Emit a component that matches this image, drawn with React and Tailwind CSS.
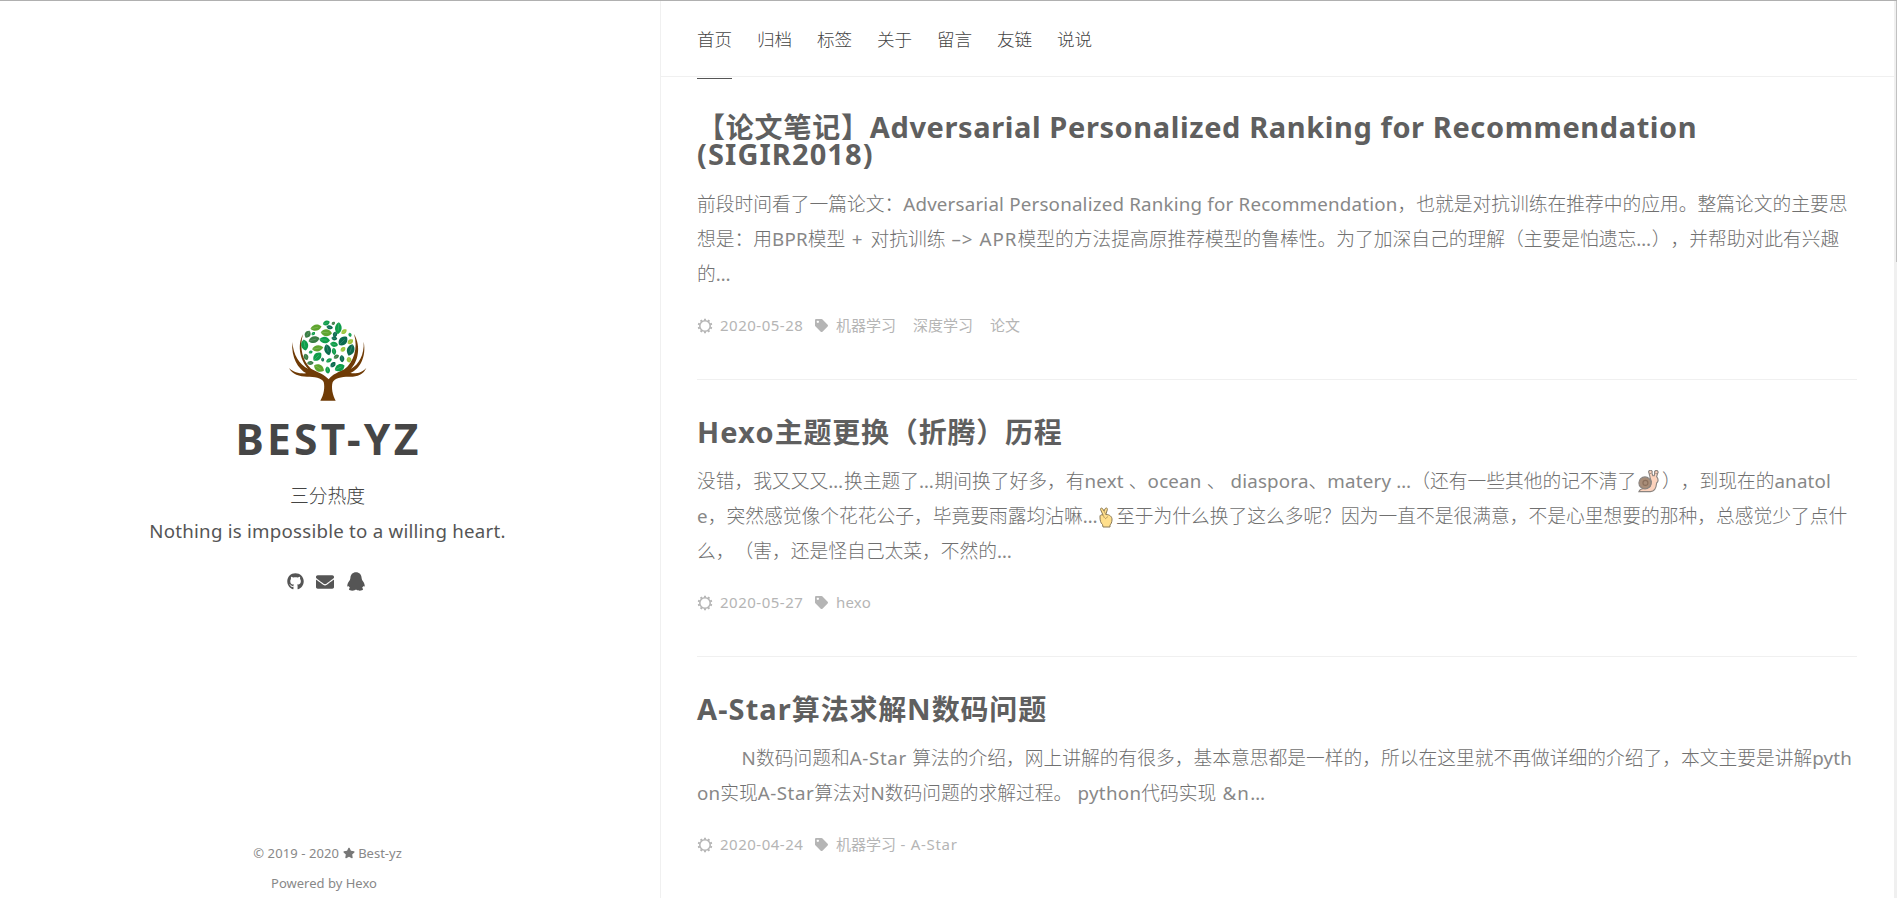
import React from "react";
import { FaGithub, FaEnvelope, FaTag, FaStar } from "react-icons/fa";

const G1 = "#0f9d4a";
const G2 = "#0b6b4f";
const G3 = "#5fa52e";
const G4 = "#3a7d44";
const G5 = "#9cc53b";

// x, y, length, width, angle, colour
const leaves = [
  [168, 70, 22, 12, -20, G1],
  [189, 71, 12, 8, -40, G4],
  [137, 84, 34, 16, -12, G3],
  [178, 83, 20, 10, 10, G2],
  [204, 86, 36, 17, 95, G1],
  [112, 104, 24, 15, 120, G4],
  [129, 102, 13, 8, -40, G1],
  [168, 99, 34, 18, 5, G3],
  [194, 104, 18, 11, 100, G2],
  [221, 96, 20, 11, -40, G5],
  [239, 105, 13, 8, 70, G1],
  [131, 120, 34, 17, -15, G4],
  [163, 121, 32, 17, 5, G1],
  [192, 116, 18, 11, 10, G2],
  [218, 124, 34, 20, -45, G2],
  [240, 126, 20, 12, -40, G5],
  [103, 136, 34, 18, 80, G1],
  [121, 157, 13, 8, -30, G1],
  [142, 146, 34, 16, -10, G3],
  [172, 150, 34, 17, 75, G2],
  [191, 134, 24, 13, 8, G1],
  [191, 155, 22, 11, 80, G1],
  [218, 149, 18, 11, -40, G5],
  [241, 151, 36, 19, 110, G2],
  [107, 172, 20, 12, 70, G4],
  [141, 171, 32, 18, -45, G1],
  [157, 180, 13, 8, 80, G2],
  [176, 182, 20, 10, -30, G1],
  [198, 171, 18, 10, -30, G4],
  [215, 177, 22, 12, 85, G2],
  [236, 180, 18, 12, 80, G5],
  [120, 190, 20, 10, -5, G4],
  [146, 205, 34, 18, 30, G3],
  [172, 211, 22, 12, 80, G1],
  [188, 195, 20, 12, -50, G2],
  [208, 204, 32, 18, -25, G1],
];

function TreeLogo() {
  return (
    <svg viewBox="50 55 246 252" className="block h-[84px] w-[82px]">
      <g fill="#6f3b06">
        <path d="M150 303 C161 285 164 262 160 247 C154 234 132 231 110 231 C88 231 65 224 56 205 C70 219 88 222 108 221 C84 208 62 175 66 127 C69 165 86 194 114 208 C92 186 78 140 98 104 C86 145 97 185 122 207 C142 218 163 224 175 239 C186 224 206 217 222 209 C250 188 264 145 251 103 C274 142 262 188 241 208 C266 194 282 165 280 126 C289 172 268 208 240 220 C258 223 276 219 288 204 C280 226 258 232 235 231 C213 231 192 236 187 248 C182 264 187 287 196 303 Z" />
      </g>
      {leaves.map(([x, y, l, w, a, c], i) => (
        <g key={i} transform={`translate(${x} ${y}) rotate(${a})`}>
          <path d={`M${-l / 2} 0 C${-l / 4} ${-w * 0.78} ${l / 4} ${-w * 0.78} ${l / 2} 0 C${l / 4} ${w * 0.78} ${-l / 4} ${w * 0.78} ${-l / 2} 0 Z`} fill={c} />
          <path d={`M${-l / 2} 0 L${l / 5} 0`} stroke="#fff" strokeOpacity="0.3" strokeWidth="1.5" />
        </g>
      ))}
    </svg>
  );
}

function Snail() {
  return (
    <svg viewBox="0 0 24 24" className="ml-px mr-[1.6px] inline-block h-[23px] w-[23px] align-[-5px]">
      <path d="M2 22.5 C3 19.5 6 19 10 19 C14 18.500 15 16 15 12 C14.500 10 13.500 8.500 13.500 7 L12.500 3 A1.800 1.800 0 1 1 15.500 3 L16.500 6 L18 6 L18.500 3 A1.800 1.800 0 1 1 21.500 3.500 L20.500 7 C22.500 9.500 22.500 12 20.500 13.500 C20 19 18 22.500 14 22.500 Z" fill="#fcd2bc" stroke="#8a8480" strokeWidth="1.200" />
      <circle cx="8.300" cy="13.500" r="6.300" fill="#a88d78" stroke="#8a8480" strokeWidth="1.200" />
      <circle cx="8.800" cy="13.500" r="2.600" fill="none" stroke="#8a6f5c" strokeWidth="1.200" />
      <path d="M14 3.500 V4 M20 3.500 V4" stroke="#555" strokeWidth="1.400" />
    </svg>
  );
}

function CrossedFingers() {
  return (
    <svg viewBox="0 0 14 21" className="ml-px mr-[2.5px] inline-block h-[21px] w-[14px] align-[-5px]">
      <path d="M1 10 C0.500 8 2.500 7.500 4 8 L1.500 2.500 C1.200 1 3 0.600 3.700 1.800 L5 4 L6.200 1.600 C7 0.500 8.800 1 8.400 2.500 L6.800 7.500 C10.500 7.500 13.300 9.500 13 13 C12.800 15.500 12 17 11 18 L11 20 L4 20 L3.500 17.500 C1.500 16 1 13 1 10 Z" fill="#ffdf8c" stroke="#8a7a58" strokeWidth="1" />
      <path d="M4 8 L5.500 11 M6.800 7.500 L5 4 M6 12 L9 9.500" fill="none" stroke="#a98f58" strokeWidth="0.800" />
    </svg>
  );
}

function Penguin() {
  return (
    <svg viewBox="0 0 18 19" className="h-[19px] w-[18px]" fill="currentColor">
      <path d="M9 0.300 C12.300 0.300 14.500 2.600 14.600 6 C14.600 6.700 15 7.200 15.100 8 C16.600 9.800 17.600 11.900 17.700 13.600 C17.700 14.800 17.100 15 16.300 14.100 C16 14.900 15.600 15.500 15 16.100 C15.900 16.500 16.200 17 16 17.600 C15.700 18.400 14.300 18.700 12.800 18.700 C11.400 18.700 10.200 18.300 9.500 17.800 H8.500 C7.800 18.300 6.600 18.700 5.200 18.700 C3.700 18.700 2.300 18.400 2 17.600 C1.800 17 2.100 16.500 3 16.100 C2.400 15.500 2 14.900 1.700 14.100 C0.900 15 0.300 14.800 0.300 13.600 C0.400 11.900 1.400 9.800 2.900 8 C3 7.200 3.400 6.700 3.400 6 C3.500 2.600 5.700 0.300 9 0.300 Z" />
    </svg>
  );
}

function RingIcon() {
  return (
    <svg viewBox="0 0 16 16" className="h-[16px] w-[16px] shrink-0" fill="none" stroke="currentColor">
      <circle cx="8" cy="8" r="5.200" strokeWidth="1.500" />
      {[0, 36, 72, 108, 144, 180, 216, 252, 288, 324].map((a) => (
        <path key={a} d="M8 2.600 V0.700" strokeWidth="1.900" transform={`rotate(${a} 8 8)`} />
      ))}
    </svg>
  );
}

const LATIN = /([\u0020-\u007e\u2013\u2026]+)/;

const WIDE_RUNS = {
  " + ": "tracking-[1.6px]",
  " –> APR": "tracking-[1px]",
  "A-Star ": "tracking-[0.6px]",
  "A-Star": "tracking-[0.5px]",
  " python": "tracking-[0.3px]",
  " &n…": "tracking-[1.2px]",
  "…": "tracking-[0.8px]",
};

function trackingOf(run) {
  return WIDE_RUNS[run] || "tracking-[0.19px]";
}

// Latin runs are set one weight heavier than the light ideographs around them.
function Mixed({ text }) {
  return text.split(LATIN).map((part, i) =>
    i % 2 ? (
      <span key={i} className={`font-normal text-[#888] ${trackingOf(part)}`}>{part}</span>
    ) : (
      part
    )
  );
}

function TitleText({ text }) {
  return text.split(LATIN).map((part, i) =>
    i % 2 ? (
      <span key={i} className={`text-[29px] ${part.length > 20 ? "tracking-[0.6px]" : "tracking-[1.1px]"}`}>{part}</span>
    ) : (
      part
    )
  );
}

const posts = [
  {
    title: ["【论文笔记】Adversarial Personalized Ranking for Recommendation", "(SIGIR2018)"],
    body: [
      ["前段时间看了一篇论文：Adversarial Personalized Ranking for Recommendation，也就是对抗训练在推荐中的应用。整篇论文的主要思"],
      ["想是：用BPR模型 + 对抗训练 –> APR模型的方法提高原推荐模型的鲁棒性。为了加深自己的理解（主要是怕遗忘…），并帮助对此有兴趣"],
      ["的…"],
    ],
    date: "2020-05-28",
    tags: ["机器学习", "深度学习", "论文"],
  },
  {
    title: ["Hexo主题更换（折腾）历程"],
    body: [
      ["没错，我又又又…换主题了…期间换了好多，有next 、ocean 、 diaspora、matery …（还有一些其他的记不清了", <Snail key="s" />, "），到现在的anatol"],
      ["e，突然感觉像个花花公子，毕竟要雨露均沾嘛…", <CrossedFingers key="c" />, "至于为什么换了这么多呢？因为一直不是很满意，不是心里想要的那种，总感觉少了点什"],
      ["么，（害，还是怪自己太菜，不然的…"],
    ],
    date: "2020-05-27",
    tags: ["hexo"],
  },
  {
    title: ["A-Star算法求解N数码问题"],
    body: [
      ["\u3000\u3000 ", <span key="i" className="inline-block w-[2px]" />, "N数码问题和A-Star 算法的介绍，网上讲解的有很多，基本意思都是一样的，所以在这里就不再做详细的介绍了，本文主要是讲解pyth"],
      ["on实现A-Star算法对N数码问题的求解过程。 python代码实现 &n…"],
    ],
    date: "2020-04-24",
    tags: ["机器学习 - A-Star"],
  },
];

function Post({ post, first }) {
  return (
    <article className={`border-b border-[#f0f0f0] pb-[36px] ${first ? "pt-[36px]" : "pt-[38px]"}`}>
      <h3 className="text-[28px] font-bold leading-[27px] tracking-[0.8px] text-[#5f5f5f]">
        {post.title.map((t) => (
          <span key={t} className="block h-[27px]"><TitleText text={t} /></span>
        ))}
      </h3>
      <p className={`text-[18.75px] font-light leading-[35px] text-[#707070] ${first ? "mt-[19px]" : "mt-[18px]"}`}>
        {post.body.map((line, i) => (
          <span key={i} className="block h-[35px]">
            {line.map((seg, j) => (typeof seg === "string" ? <Mixed key={j} text={seg} /> : seg))}
          </span>
        ))}
      </p>
      <div className="mt-[17px] flex h-[35px] items-center text-[15px] leading-[35px] text-[#b5b5b5]">
        <RingIcon />
        <span className="ml-[7px] w-[95px] tracking-[0.5px]">{post.date}</span>
        <FaTag className="h-[13px] w-[13px]" />
        <span className="ml-[8px] flex gap-[17px]">
          {post.tags.map((t) => (
            <span key={t}>
              {t.split(LATIN).map((part, i) =>
                i % 2 ? <span key={i} className={part === "hexo" ? "tracking-[0.2px]" : "tracking-[0.7px]"}>{part}</span> : part
              )}
            </span>
          ))}
        </span>
      </div>
    </article>
  );
}

const nav = ["首页", "归档", "标签", "关于", "留言", "友链", "说说"];

export default function App() {
  return (
    <div className="flex h-[898px] w-[1897px] overflow-hidden whitespace-pre border-t border-[#b0b0b0] bg-white font-['Noto_Sans','Noto_Sans_CJK_SC',sans-serif] [text-spacing-trim:space-all]">
      <aside className="flex w-[661px] shrink-0 flex-col items-center border-r border-[#f0f0f0] pr-[5px]">
        <div className="mt-[317px]">
          <TreeLogo />
        </div>
        <h1 className="mt-[9px] pl-[2px] text-[42.5px] font-bold leading-[56px] tracking-[3.3px] text-[#464646]">BEST-YZ</h1>
        <p className="mt-[12px] text-[18.8px] font-light leading-[35px] text-[#444]">三分热度</p>
        <p className="-mt-px text-[18.7px] leading-[35px] tracking-[0.23px] text-[#555]">Nothing is impossible to a willing heart.</p>
        <div className="mt-[24px] flex h-[19px] items-center pr-[4px] text-[#555]">
          <FaGithub className="mr-[12px] h-[17px] w-[17px]" />
          <FaEnvelope className="mr-[13px] h-[18px] w-[18px]" />
          <Penguin />
        </div>
        <footer className="mt-auto flex flex-col items-center text-[13px] leading-[30px] text-[#888]">
          <div className="flex items-center">
            <span className="tracking-[0.1px]">© 2019 - 2020</span>
            <FaStar className="ml-[4px] mr-[3px] h-[12px] w-[12px] text-[#777]" />
            <span>Best-yz</span>
          </div>
          <span className="pr-[7px]">Powered by Hexo</span>
        </footer>
      </aside>
      <main className="flex min-w-0 flex-1 flex-col">
        <nav className="flex h-[76px] shrink-0 gap-[24.8px] border-b border-[#f0f0f0] pl-[36px] text-[17.6px] font-light leading-[76px] text-[#444]">
          {nav.map((n, i) => (
            <a key={n} className={`h-[78px] shrink-0 ${i === 0 ? "border-b border-[#555]" : ""}`}>{n}</a>
          ))}
        </nav>
        <div className="pl-[36px] pr-[37px]">
          {posts.map((p, i) => (
            <Post key={p.date} post={p} first={i === 0} />
          ))}
        </div>
      </main>
      <div className="flex w-[3px] shrink-0 justify-end bg-[#f0f0f0]">
        <div className="h-[261px] w-px bg-[#c1c1c1]" />
      </div>
    </div>
  );
}
